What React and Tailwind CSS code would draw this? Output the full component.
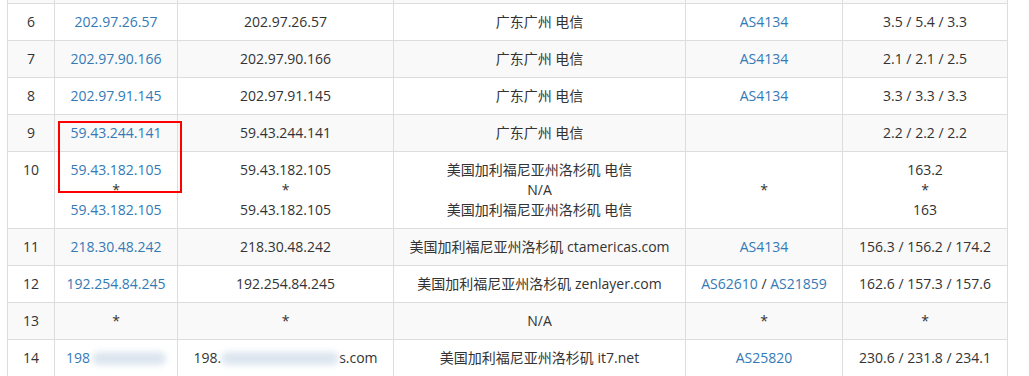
const LINK = "text-[#337ab7]";

const Smear = ({ className = "" }) => (
  <span
    className={`inline-block align-middle h-[13px] rounded-full bg-[#d3dfeb] blur-[3px] opacity-80 ${className}`}
  />
);

const rows = [
  {
    n: 6,
    ip: ["202.97.26.57"],
    host: ["202.97.26.57"],
    loc: ["广东广州 电信"],
    as: [["AS4134"]],
    lat: ["3.5 / 5.4 / 3.3"],
  },
  {
    n: 7,
    ip: ["202.97.90.166"],
    host: ["202.97.90.166"],
    loc: ["广东广州 电信"],
    as: [["AS4134"]],
    lat: ["2.1 / 2.1 / 2.5"],
  },
  {
    n: 8,
    ip: ["202.97.91.145"],
    host: ["202.97.91.145"],
    loc: ["广东广州 电信"],
    as: [["AS4134"]],
    lat: ["3.3 / 3.3 / 3.3"],
  },
  {
    n: 9,
    ip: ["59.43.244.141"],
    host: ["59.43.244.141"],
    loc: ["广东广州 电信"],
    as: [],
    lat: ["2.2 / 2.2 / 2.2"],
  },
  {
    n: 10,
    ip: ["59.43.182.105", "*", "59.43.182.105"],
    host: ["59.43.182.105", "*", "59.43.182.105"],
    loc: ["美国加利福尼亚州洛杉矶 电信", "N/A", "美国加利福尼亚州洛杉矶 电信"],
    as: "*",
    lat: ["163.2", "*", "163"],
  },
  {
    n: 11,
    ip: ["218.30.48.242"],
    host: ["218.30.48.242"],
    loc: ["美国加利福尼亚州洛杉矶 ctamericas.com"],
    as: [["AS4134"]],
    lat: ["156.3 / 156.2 / 174.2"],
  },
  {
    n: 12,
    ip: ["192.254.84.245"],
    host: ["192.254.84.245"],
    loc: ["美国加利福尼亚州洛杉矶 zenlayer.com"],
    as: [["AS62610", "AS21859"]],
    lat: ["162.6 / 157.3 / 157.6"],
  },
  {
    n: 13,
    ip: ["*"],
    host: ["*"],
    loc: ["N/A"],
    as: "*",
    lat: ["*"],
  },
];

const Lines = ({ items, link }) =>
  items.map((t, i) => (
    <div key={i} className={link && t !== "*" ? LINK : ""}>
      {t}
    </div>
  ));

const td = "border border-[#ddd] px-2 py-2 text-center align-top leading-5";

export default function App() {
  return (
    <div
      className="relative w-[1029px] h-[376px] overflow-hidden bg-white text-[14px] text-[#333]"
      style={{ fontFamily: '"Open Sans", "Noto Sans CJK SC", sans-serif' }}
    >
      <table className="ml-[7px] w-[1000px] table-fixed border-collapse">
        <colgroup>
          <col className="w-[47px]" />
          <col className="w-[123px]" />
          <col className="w-[216px]" />
          <col className="w-[292px]" />
          <col className="w-[157px]" />
          <col className="w-[165px]" />
        </colgroup>
        <tbody>
          <tr className="bg-[#f9f9f9]">
            {[0, 1, 2, 3, 4, 5].map((i) => (
              <td key={i} className="h-[3px] p-0 border-x border-b border-[#ddd]" />
            ))}
          </tr>
          {rows.map((r, idx) => (
            <tr key={r.n} className={idx % 2 === 1 ? "bg-[#f9f9f9]" : "bg-white"}>
              <td className={td}>{r.n}</td>
              <td className={td}>
                <Lines items={r.ip} link />
              </td>
              <td className={td}>
                <Lines items={r.host} />
              </td>
              <td className={td}>
                <Lines items={r.loc} />
              </td>
              <td className={`${td} !align-middle`}>
                {r.as === "*" ? (
                  "*"
                ) : (
                  r.as.map((grp, gi) => (
                    <div key={gi}>
                      {grp.map((a, ai) => (
                        <span key={a}>
                          {ai > 0 && " / "}
                          <span className={LINK}>{a}</span>
                        </span>
                      ))}
                    </div>
                  ))
                )}
              </td>
              <td className={td}>
                <Lines items={r.lat} />
              </td>
            </tr>
          ))}
          <tr className="bg-white">
            <td className={td}>14</td>
            <td className={`${td} whitespace-nowrap`}>
              <span className={LINK}>198</span>
              <Smear className="w-[74px] ml-[2px]" />
            </td>
            <td className={`${td} whitespace-nowrap`}>
              198.<Smear className="w-[118px]" />s.com
            </td>
            <td className={td}>美国加利福尼亚州洛杉矶 it7.net</td>
            <td className={td}>
              <span className={LINK}>AS25820</span>
            </td>
            <td className={td}>230.6 / 231.8 / 234.1</td>
          </tr>
        </tbody>
      </table>
      <div className="absolute left-[58px] top-[121px] w-[124px] h-[72px] border-2 border-[#f00]" />
    </div>
  );
}
